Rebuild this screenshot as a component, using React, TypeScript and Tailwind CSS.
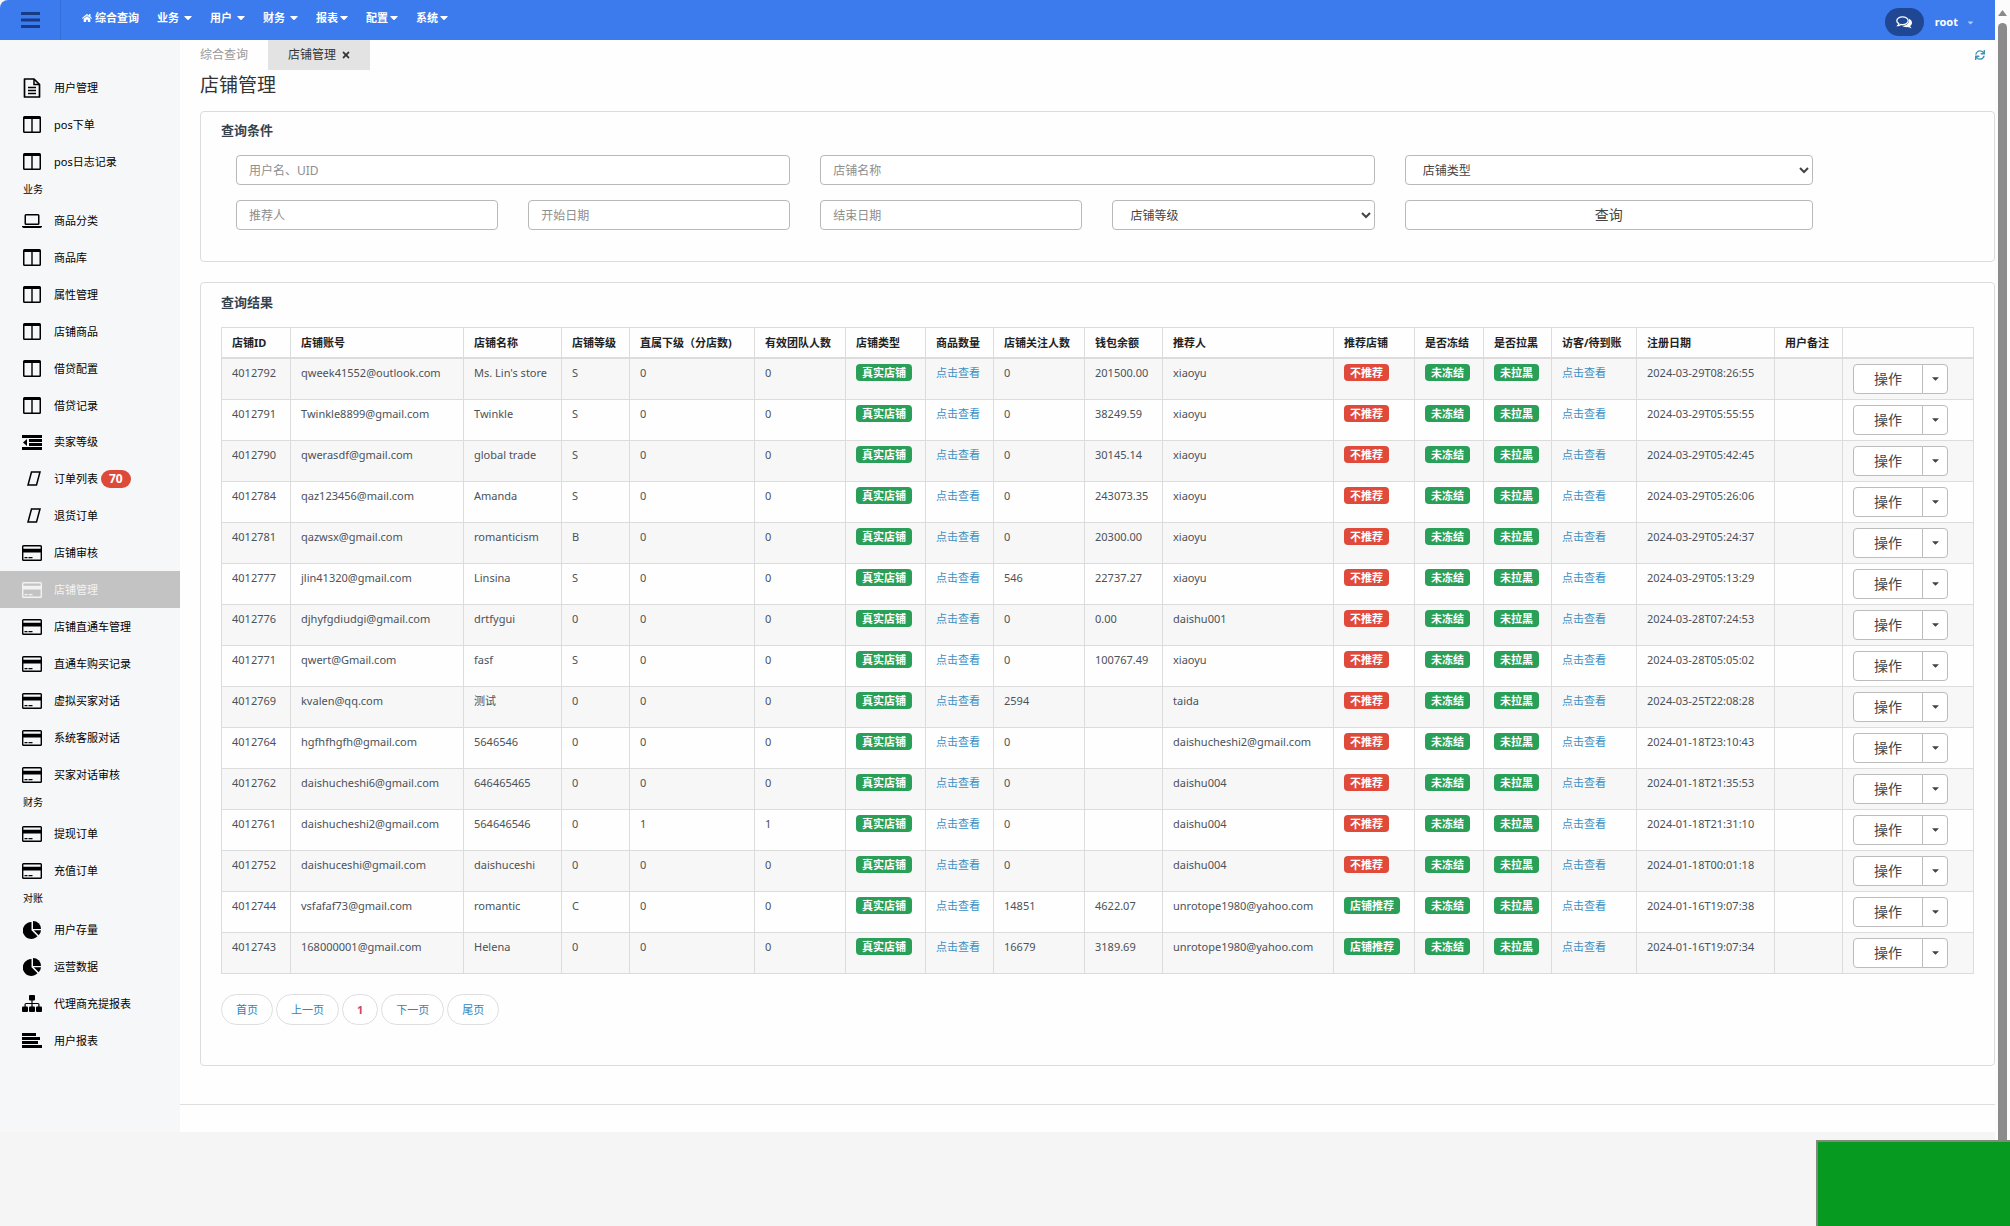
import type { ReactNode } from "react";
import { FaCaretDown, FaHome, FaSync, FaTimes } from "react-icons/fa";

type IconName = "file" | "columns" | "laptop" | "outdent" | "slant" | "card" | "pie" | "sitemap" | "align";

type MenuItem = {
  label: string;
  icon: IconName;
  badge?: number;
  active?: boolean;
};

type MenuGroup = {
  title?: string;
  items: MenuItem[];
};

const navItems = ["业务", "用户", "财务"];
const navItemsTight = ["报表", "配置", "系统"];

const menu: MenuGroup[] = [
  {
    items: [
      { label: "用户管理", icon: "file" },
      { label: "pos下单", icon: "columns" },
      { label: "pos日志记录", icon: "columns" },
    ],
  },
  {
    title: "业务",
    items: [
      { label: "商品分类", icon: "laptop" },
      { label: "商品库", icon: "columns" },
      { label: "属性管理", icon: "columns" },
      { label: "店铺商品", icon: "columns" },
      { label: "借贷配置", icon: "columns" },
      { label: "借贷记录", icon: "columns" },
      { label: "卖家等级", icon: "outdent" },
      { label: "订单列表", icon: "slant", badge: 70 },
      { label: "退货订单", icon: "slant" },
      { label: "店铺审核", icon: "card" },
      { label: "店铺管理", icon: "card", active: true },
      { label: "店铺直通车管理", icon: "card" },
      { label: "直通车购买记录", icon: "card" },
      { label: "虚拟买家对话", icon: "card" },
      { label: "系统客服对话", icon: "card" },
      { label: "买家对话审核", icon: "card" },
    ],
  },
  {
    title: "财务",
    items: [
      { label: "提现订单", icon: "card" },
      { label: "充值订单", icon: "card" },
    ],
  },
  {
    title: "对账",
    items: [
      { label: "用户存量", icon: "pie" },
      { label: "运营数据", icon: "pie" },
      { label: "代理商充提报表", icon: "sitemap" },
      { label: "用户报表", icon: "align" },
    ],
  },
];

const columns = [
  { title: "店铺ID", width: "w-[69px]" },
  { title: "店铺账号", width: "w-[173px]" },
  { title: "店铺名称", width: "w-[98px]" },
  { title: "店铺等级", width: "w-[68px]" },
  { title: "直属下级（分店数)", width: "w-[125px]" },
  { title: "有效团队人数", width: "w-[91px]" },
  { title: "店铺类型", width: "w-[80px]" },
  { title: "商品数量", width: "w-[68px]" },
  { title: "店铺关注人数", width: "w-[91px]" },
  { title: "钱包余额", width: "w-[78px]" },
  { title: "推荐人", width: "w-[171px]" },
  { title: "推荐店铺", width: "w-[81px]" },
  { title: "是否冻结", width: "w-[69px]" },
  { title: "是否拉黑", width: "w-[68px]" },
  { title: "访客/待到账", width: "w-[85px]" },
  { title: "注册日期", width: "w-[138px]" },
  { title: "用户备注", width: "w-[68px]" },
  { title: "", width: "w-[131px]" },
];

type Shop = {
  id: string;
  account: string;
  name: string;
  level: string;
  children: string;
  team: string;
  follows: string;
  balance: string;
  referrer: string;
  recommended?: boolean;
  date: string;
};

const shops: Shop[] = [
  { id: "4012792", account: "qweek41552@outlook.com", name: "Ms. Lin's store", level: "S", children: "0", team: "0", follows: "0", balance: "201500.00", referrer: "xiaoyu", date: "2024-03-29T08:26:55" },
  { id: "4012791", account: "Twinkle8899@gmail.com", name: "Twinkle", level: "S", children: "0", team: "0", follows: "0", balance: "38249.59", referrer: "xiaoyu", date: "2024-03-29T05:55:55" },
  { id: "4012790", account: "qwerasdf@gmail.com", name: "global trade", level: "S", children: "0", team: "0", follows: "0", balance: "30145.14", referrer: "xiaoyu", date: "2024-03-29T05:42:45" },
  { id: "4012784", account: "qaz123456@mail.com", name: "Amanda", level: "S", children: "0", team: "0", follows: "0", balance: "243073.35", referrer: "xiaoyu", date: "2024-03-29T05:26:06" },
  { id: "4012781", account: "qazwsx@gmail.com", name: "romanticism", level: "B", children: "0", team: "0", follows: "0", balance: "20300.00", referrer: "xiaoyu", date: "2024-03-29T05:24:37" },
  { id: "4012777", account: "jlin41320@gmail.com", name: "Linsina", level: "S", children: "0", team: "0", follows: "546", balance: "22737.27", referrer: "xiaoyu", date: "2024-03-29T05:13:29" },
  { id: "4012776", account: "djhyfgdiudgi@gmail.com", name: "drtfygui", level: "0", children: "0", team: "0", follows: "0", balance: "0.00", referrer: "daishu001", date: "2024-03-28T07:24:53" },
  { id: "4012771", account: "qwert@Gmail.com", name: "fasf", level: "S", children: "0", team: "0", follows: "0", balance: "100767.49", referrer: "xiaoyu", date: "2024-03-28T05:05:02" },
  { id: "4012769", account: "kvalen@qq.com", name: "测试", level: "0", children: "0", team: "0", follows: "2594", balance: "", referrer: "taida", date: "2024-03-25T22:08:28" },
  { id: "4012764", account: "hgfhfhgfh@gmail.com", name: "5646546", level: "0", children: "0", team: "0", follows: "0", balance: "", referrer: "daishucheshi2@gmail.com", date: "2024-01-18T23:10:43" },
  { id: "4012762", account: "daishucheshi6@gmail.com", name: "646465465", level: "0", children: "0", team: "0", follows: "0", balance: "", referrer: "daishu004", date: "2024-01-18T21:35:53" },
  { id: "4012761", account: "daishucheshi2@gmail.com", name: "564646546", level: "0", children: "1", team: "1", follows: "0", balance: "", referrer: "daishu004", date: "2024-01-18T21:31:10" },
  { id: "4012752", account: "daishuceshi@gmail.com", name: "daishuceshi", level: "0", children: "0", team: "0", follows: "0", balance: "", referrer: "daishu004", date: "2024-01-18T00:01:18" },
  { id: "4012744", account: "vsfafaf73@gmail.com", name: "romantic", level: "C", children: "0", team: "0", follows: "14851", balance: "4622.07", referrer: "unrotope1980@yahoo.com", recommended: true, date: "2024-01-16T19:07:38" },
  { id: "4012743", account: "168000001@gmail.com", name: "Helena", level: "0", children: "0", team: "0", follows: "16679", balance: "3189.69", referrer: "unrotope1980@yahoo.com", recommended: true, date: "2024-01-16T19:07:34" },
];

function MenuIcon({ name }: { name: IconName }) {
  switch (name) {
    case "file":
      return (
        <svg width="18" height="20" viewBox="0 0 18 20" fill="none" stroke="currentColor" strokeWidth="1.700">
          <path d="M1.500 1H11l5.500 5.500V19h-15z" strokeLinejoin="round" />
          <path d="M11 1v5.500h5.500" strokeWidth="1.500" />
          <path d="M5 9.500h8M5 12.500h8M5 15.500h8" strokeWidth="1.500" />
        </svg>
      );
    case "columns":
      return (
        <svg width="18" height="17" viewBox="0 0 18 17" fill="currentColor">
          <path fillRule="evenodd" d="M1.500 0h15A1.500 1.500 0 0 1 18 1.500v14a1.500 1.500 0 0 1-1.500 1.500h-15A1.500 1.500 0 0 1 0 15.500v-14A1.500 1.500 0 0 1 1.500 0zM1.500 3v12.500h6.800V3zM9.700 3v12.500h6.800V3z" />
        </svg>
      );
    case "laptop":
      return (
        <svg width="20" height="14" viewBox="0 0 20 14" fill="currentColor">
          <path fillRule="evenodd" d="M4 0h12a1.500 1.500 0 0 1 1.500 1.500v8A1.500 1.500 0 0 1 16 11H4a1.500 1.500 0 0 1-1.500-1.500v-8A1.500 1.500 0 0 1 4 0zM4 1.500v8h12v-8z" />
          <path d="M0 12h20v.5Q19.500 14 18 14H2Q.5 14 0 12.500z" />
        </svg>
      );
    case "outdent":
      return (
        <svg width="20" height="15" viewBox="0 0 20 15" fill="currentColor">
          <path d="M0 0h20v3H0zM7 4h13v3H7zM7 8h13v3H7zM0 12h20v3H0zM5 4v7L1 7.500z" />
        </svg>
      );
    case "slant":
      return (
        <svg width="14" height="15" viewBox="0 0 14 15" fill="none" stroke="currentColor" strokeWidth="1.500" className="ml-[3px]">
          <path d="M4.500 1h8.500L9.500 14H1z" />
        </svg>
      );
    case "card":
      return (
        <svg width="20" height="16" viewBox="0 0 20 16" fill="currentColor">
          <path fillRule="evenodd" d="M1.500 0h17A1.500 1.500 0 0 1 20 1.500v13a1.500 1.500 0 0 1-1.500 1.500h-17A1.500 1.500 0 0 1 0 14.500v-13A1.500 1.500 0 0 1 1.500 0zM1.400 1.400v2.300h17.200V1.400zM1.400 7.500v7.100h17.200V7.500z" />
          <path d="M2.500 12h3v1.300h-3zM6.500 12h4v1.300h-4z" />
        </svg>
      );
    case "pie":
      return (
        <svg width="18" height="18" viewBox="0 0 18 18" fill="currentColor">
          <path d="M8.500 1v8.300l6 6A8.500 8.500 0 1 1 8.500 1z" />
          <path d="M10 0a8 8 0 0 1 8 8h-8z" />
          <path d="M10.800 9.300H18a8 8 0 0 1-2.300 5z" />
        </svg>
      );
    case "sitemap":
      return (
        <svg width="20" height="17" viewBox="0 0 20 17" fill="currentColor">
          <rect x="7" width="6" height="5.500" rx="1" />
          <rect y="11.500" width="6" height="5.500" rx="1" />
          <rect x="7" y="11.500" width="6" height="5.500" rx="1" />
          <rect x="14" y="11.500" width="6" height="5.500" rx="1" />
          <path d="M9.400 5h1.200v2.900H16q1.500 0 1.500 1.500V12h-1.200V9.100h-5.700V12H9.400V9.100H3.700V12H2.500V9.400Q2.500 7.900 4 7.900h5.400z" />
        </svg>
      );
    case "align":
      return (
        <svg width="20" height="15" viewBox="0 0 20 15" fill="currentColor">
          <path d="M0 0h14v3H0zM0 4h18v3H0zM0 8h16v3H0zM0 12h20v3H0z" />
        </svg>
      );
  }
}

function TopBar() {
  return (
    <header className="flex h-10 items-center rounded-tl-lg bg-[#3b7bee] text-[11px] font-bold leading-4 text-white">
      <button aria-label="菜单" className="flex h-10 w-[61px] items-center border-r border-[#3570d8] pl-[21px] text-[#163b82]">
        <svg width="19" height="16" viewBox="0 0 19 16" fill="currentColor">
          <rect width="19" height="3" rx="0.500" />
          <rect y="6.500" width="19" height="3" rx="0.500" />
          <rect y="13" width="19" height="3" rx="0.500" />
        </svg>
      </button>
      <nav className="flex items-center gap-[18px] pb-[5px] pl-[21px]">
        <a href="#home" className="flex items-center gap-[3px]">
          <FaHome size={10} />
          综合查询
        </a>
        {navItems.map((item) => (
          <button key={item} className="flex items-center gap-[5px]">
            {item}
            <FaCaretDown size={13} className="w-2" />
          </button>
        ))}
        {navItemsTight.map((item) => (
          <button key={item} className="flex items-center gap-[2px]">
            {item}
            <FaCaretDown size={13} className="w-2" />
          </button>
        ))}
      </nav>
      <div className="ml-auto flex items-center gap-[11px] pr-[20px] pt-1">
        <button aria-label="消息" className="flex h-7 w-[39px] items-center justify-center rounded-full bg-[#1f4794]">
          <svg width="16" height="13" viewBox="0 0 16 13">
            <path d="M12.800 2.800C15 3.800 16 5.200 16 6.800c0 1.300-.7 2.400-1.800 3.200.2.900.7 1.500 1.400 2.200-1.500.1-2.600-.4-3.500-1.200-2.300.4-4.600 0-6.300-1.200 4.800.2 8.200-2.600 7-7z" fill="currentColor" />
            <path d="M6.500.8c3.200 0 5.700 1.700 5.700 3.900S9.700 8.600 6.500 8.600q-.9 0-1.700-.2c-.8.700-1.800 1.200-3 1.200.6-.6 1-1.200 1-2C1.600 6.900.8 5.900.8 4.700.8 2.500 3.300.8 6.500.8z" fill="#1f4794" stroke="currentColor" strokeWidth="1.300" />
          </svg>
        </button>
        <button className="flex items-center gap-2">
          root
          <FaCaretDown size={9} className="opacity-60" />
        </button>
      </div>
    </header>
  );
}

function Sidebar() {
  return (
    <aside className="w-[180px] shrink-0 bg-[#f6f7f9] pt-[29px] text-[11px] leading-4 text-black">
      {menu.map((group, index) => (
        <div key={index}>
          {group.title ? <h2 className="h-[22px] pl-[23px] pt-px text-[10px]">{group.title}</h2> : null}
          <ul>
            {group.items.map((item) => (
              <li key={item.label}>
                <a
                  href="#menu"
                  className={
                    item.active
                      ? "flex h-[37px] items-center gap-3 bg-[#c3c3c3] pl-[22px] text-[#f2f2f2]"
                      : item.icon === "outdent"
                        ? "flex h-9 items-center gap-3 pl-[22px]"
                        : "flex h-[37px] items-center gap-3 pl-[22px]"
                  }
                >
                  <span className="flex w-5 justify-center">
                    <MenuIcon name={item.icon} />
                  </span>
                  <span className="flex items-center gap-[3px]">
                    {item.label}
                    {item.badge ? (
                      <span className="rounded-full bg-[#de4a3a] px-2 py-px text-xs font-bold text-white">{item.badge}</span>
                    ) : null}
                  </span>
                </a>
              </li>
            ))}
          </ul>
        </div>
      ))}
    </aside>
  );
}

const field = "h-[30px] w-full rounded-sm border border-[#b9b9b9] bg-white text-xs text-[#444]";
const input = `${field} px-3 placeholder:text-[#8e8e8e]`;
const select = `${field} px-[11px] indent-[2px]`;

function SearchPanel() {
  return (
    <section className="rounded-sm border border-[#dcdcdc] px-5 pb-[31px] pt-[9px]">
      <h2 className="text-[13px] font-bold leading-[18px] text-[#37424f]">查询条件</h2>
      <form className="mt-4 grid grid-cols-12 gap-y-[15px]">
        <div className="col-span-4 px-[15px]">
          <input aria-label="用户名、UID" placeholder="用户名、UID" className={input} />
        </div>
        <div className="col-span-4 px-[15px]">
          <input aria-label="店铺名称" placeholder="店铺名称" className={input} />
        </div>
        <div className="col-span-3 px-[15px]">
          <select aria-label="店铺类型" className={select}>
            <option>店铺类型</option>
          </select>
        </div>
        <div className="col-span-2 col-start-1 px-[15px]">
          <input aria-label="推荐人" placeholder="推荐人" className={input} />
        </div>
        <div className="col-span-2 px-[15px]">
          <input aria-label="开始日期" placeholder="开始日期" className={input} />
        </div>
        <div className="col-span-2 px-[15px]">
          <input aria-label="结束日期" placeholder="结束日期" className={input} />
        </div>
        <div className="col-span-2 px-[15px]">
          <select aria-label="店铺等级" className={select}>
            <option>店铺等级</option>
          </select>
        </div>
        <div className="col-span-3 px-[15px]">
          <button type="button" className="h-[30px] w-full rounded-sm border border-[#b9b9b9] bg-white text-sm text-[#444]">
            查询
          </button>
        </div>
      </form>
    </section>
  );
}

function Tag({ red, children }: { red?: boolean; children: ReactNode }) {
  return (
    <span
      className={
        red
          ? "inline-block rounded bg-[#df4a3a] px-[6px] align-top font-bold leading-[17px] text-white"
          : "inline-block rounded bg-[#2a9f58] px-[6px] align-top font-bold leading-[17px] text-white"
      }
    >
      {children}
    </span>
  );
}

function Cell({ children }: { children?: ReactNode }) {
  return <td className="border border-[#dcdcdc] px-[10px] py-[5px] align-top">{children}</td>;
}

function ShopTable() {
  return (
    <table className="mt-4 w-full table-fixed border-collapse whitespace-nowrap text-left text-[11px] leading-[17px] text-[#4b5258]">
      <colgroup>
        {columns.map((column) => (
          <col key={column.title} className={column.width} />
        ))}
      </colgroup>
      <thead>
        <tr className="h-[30px] text-[#222]">
          {columns.map((column) => (
            <th key={column.title} className="border border-b-2 border-[#dcdcdc] px-[10px] font-bold">
              {column.title}
            </th>
          ))}
        </tr>
      </thead>
      <tbody>
        {shops.map((shop) => (
          <tr key={shop.id} className="odd:bg-[#f7f7f8]">
            <Cell>{shop.id}</Cell>
            <Cell>{shop.account}</Cell>
            <Cell>{shop.name}</Cell>
            <Cell>{shop.level}</Cell>
            <Cell>{shop.children}</Cell>
            <Cell>{shop.team}</Cell>
            <Cell>
              <Tag>真实店铺</Tag>
            </Cell>
            <Cell>
              <a href="#goods" className="text-[#3c8fc4]">点击查看</a>
            </Cell>
            <Cell>{shop.follows}</Cell>
            <Cell>{shop.balance}</Cell>
            <Cell>{shop.referrer}</Cell>
            <Cell>{shop.recommended ? <Tag>店铺推荐</Tag> : <Tag red>不推荐</Tag>}</Cell>
            <Cell>
              <Tag>未冻结</Tag>
            </Cell>
            <Cell>
              <Tag>未拉黑</Tag>
            </Cell>
            <Cell>
              <a href="#visitors" className="text-[#3c8fc4]">点击查看</a>
            </Cell>
            <Cell>{shop.date}</Cell>
            <Cell />
            <Cell>
              <div className="flex text-sm text-[#444]">
                <button className="h-[30px] w-[70px] rounded-l-sm border border-[#bcbcbc] bg-white">操作</button>
                <button aria-label="更多操作" className="-ml-px flex h-[30px] w-[26px] items-center justify-center rounded-r-sm border border-[#bcbcbc] bg-white">
                  <FaCaretDown size={11} />
                </button>
              </div>
            </Cell>
          </tr>
        ))}
      </tbody>
    </table>
  );
}

function Pagination() {
  return (
    <nav className="mt-5 flex gap-[3px] text-[11px] leading-[29px] text-[#2f84bb]">
      {["首页", "上一页", "1", "下一页", "尾页"].map((page) => (
        <a
          key={page}
          href="#page"
          className={
            page === "1"
              ? "rounded-full border border-[#dedede] bg-white px-[14px] font-bold text-[#cc4a64]"
              : "rounded-full border border-[#dedede] bg-white px-[14px]"
          }
        >
          {page}
        </a>
      ))}
    </nav>
  );
}

export default function App() {
  return (
    <div className="relative flex min-h-screen bg-[#f5f5f5] font-['Noto_Sans','Noto_Sans_CJK_SC',sans-serif]">
      <div className="min-w-0 flex-1">
        <TopBar />
        <div className="flex">
          <Sidebar />
          <main className="min-w-0 flex-1 bg-[#fefefe]">
            <div className="pl-5">
              <div className="flex h-[30px] items-center text-xs">
                <a href="#summary" className="pr-5 text-[#999]">综合查询</a>
                <div className="flex h-[30px] items-center gap-[5px] bg-[#e3e3e3] pl-5 pr-[19px] text-[#333]">
                  店铺管理
                  <button aria-label="关闭">
                    <FaTimes size={10} />
                  </button>
                </div>
                <button aria-label="刷新" className="ml-auto pr-[10px] text-[#3f93bb]">
                  <FaSync size={10} />
                </button>
              </div>
              <h1 className="mb-[10px] text-[19px] leading-[31px] text-[#333]">店铺管理</h1>
              <SearchPanel />
              <section className="mt-5 rounded-sm border border-[#dcdcdc] px-5 pb-10 pt-[10px]">
                <h2 className="text-[13px] font-bold leading-[18px] text-[#37424f]">查询结果</h2>
                <ShopTable />
                <Pagination />
              </section>
            </div>
            <footer className="mt-[38px] h-7 border-t border-[#dedede]" />
          </main>
        </div>
      </div>
      <div className="flex w-[15px] shrink-0 flex-col items-center bg-[#fcfcfc] pt-[10px]">
        <svg width="9" height="6" viewBox="0 0 9 6" fill="#8a8a8a" className="mb-[7px]">
          <path d="M4.500 0 9 6H0z" />
        </svg>
        <div className="w-[9px] flex-1 rounded-t-full bg-[#8b8b8b]" />
      </div>
      <div className="absolute bottom-0 right-0 h-[86px] w-[194px] border-l-2 border-t-2 border-[#7d8a7d] bg-[#069a20]" />
    </div>
  );
}
